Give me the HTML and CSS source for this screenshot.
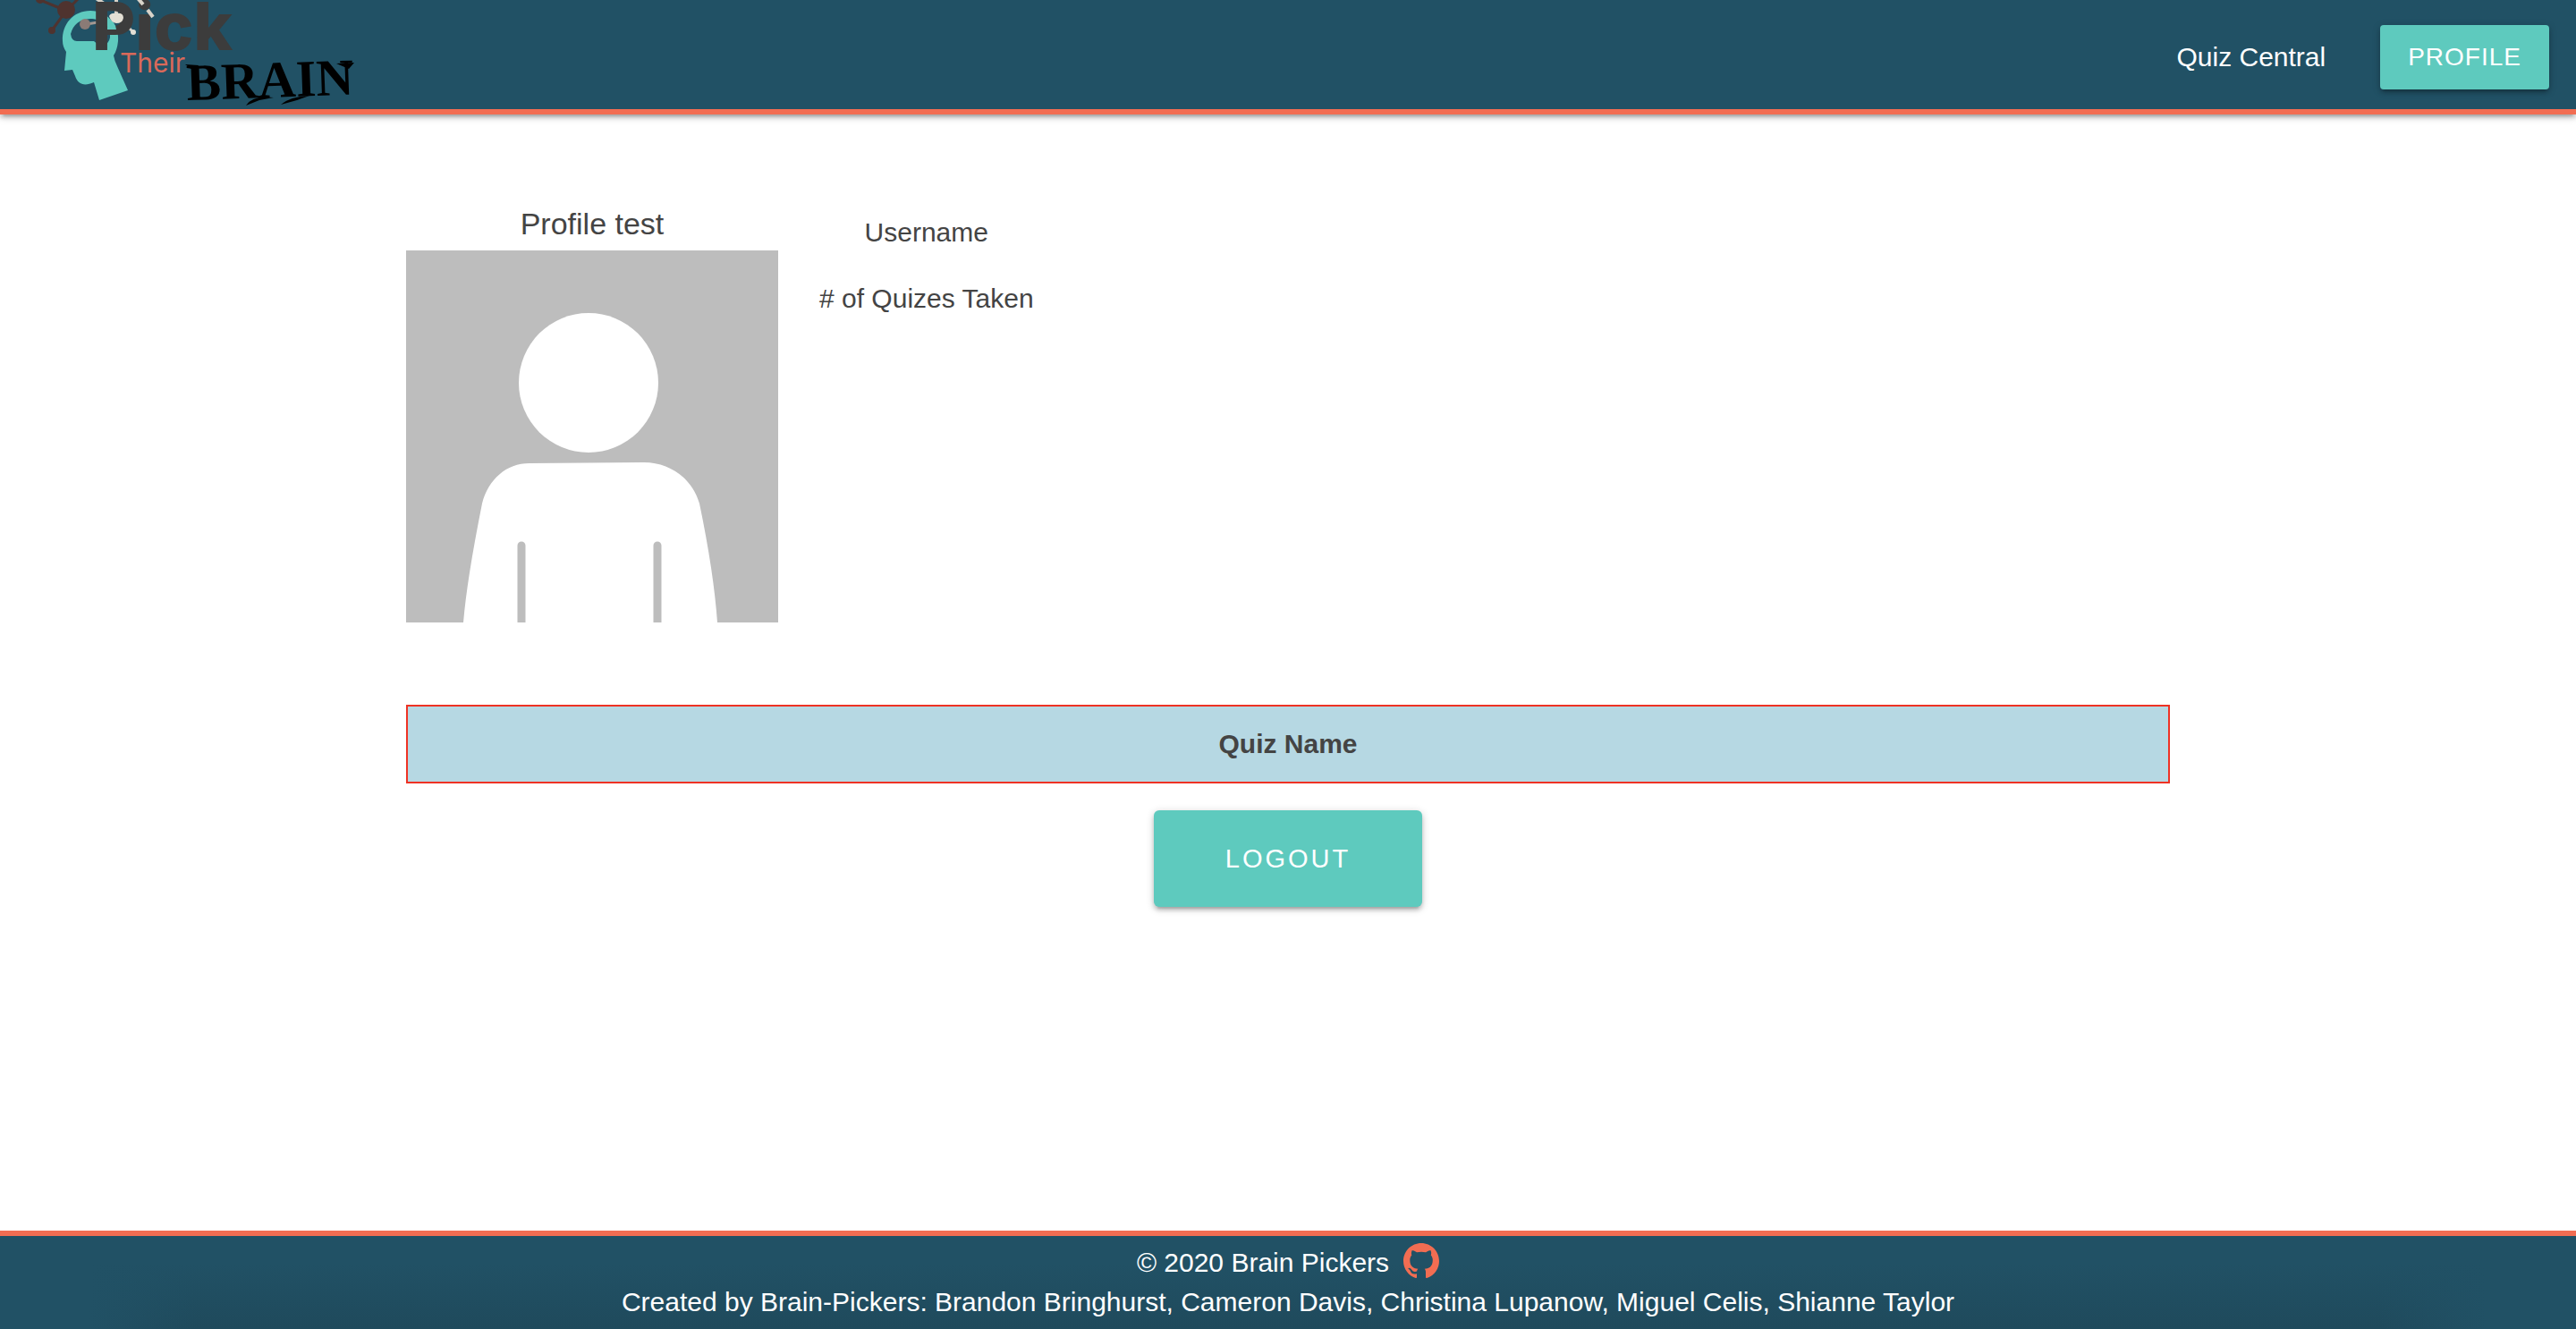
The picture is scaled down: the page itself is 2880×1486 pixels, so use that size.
FILE: index.html
```html
<!DOCTYPE html>
<html lang="en">
<head>
<meta charset="utf-8">
<title>Pick Their Brain - Profile</title>
<link rel="stylesheet" href="styles.css">
</head>
<body>
<header class="navbar">
  <a href="#" class="brand" aria-label="Pick Their Brain">
    <svg class="logo" viewBox="0 0 420 122" role="img" aria-label="Pick Their Brain">
      <g fill="#4f332f">
        <path d="M45 0L74 12L58 34M74 12L88 -2" fill="none" stroke="#4f332f" stroke-width="3"/>
        <circle cx="74" cy="11" r="10"/><circle cx="58" cy="34" r="4"/><circle cx="45" cy="-1" r="5"/>
      </g>
      <path fill="#5ecabe" fill-rule="evenodd" d="M70 46C69 27 82 12 101 12C121 12 134 30 132 46Q131 56 127 62Q128 68 131 74L143 101L111 112L105 92C94 97 87 94 84 85L81 78L72 79L74 58Q70 52 70 46ZM79 38Q80 46 86 46L105 46Q110 51 117 51Q124 46 123 38C123 28 112 21 101 21Q83 22 79 38Z"/>
      <g fill="none" stroke="#d8d3c9" stroke-width="4"><path d="M106 -3L122 8M130 -2V15"/><path d="M137 24L149 36" stroke-width="3"/></g>
      <path d="M97 27L109 25" stroke="#a39892" stroke-width="3"/>
      <circle cx="95" cy="27" r="6" fill="#8a7b76"/>
      <text class="logo-pick" x="103" y="56">Pick</text>
      <path fill="#5ecabe" d="M120 20Q129 24 130 33H120Z"/>
      <path fill="#e3dfd4" d="M122 18Q124 14 130 15Q138 14 138 20Q137 26 130 26Q124 25 122 18Z"/>
      <path d="M154 -2L160 5M165 11L171 19" stroke="#d8d3c9" stroke-width="4"/>
      <circle cx="149" cy="36" r="3" fill="#e3dfd4"/>
      <text class="logo-their" x="134" y="81">Their</text>
      <text class="logo-brain" x="209" y="112" transform="rotate(-2 209 112)">BRAIN</text>
      <path d="M275 118Q282 106 306 109L290 112ZM314 117Q324 108 346 107L332 112ZM207 72L222 73L218 80ZM396 70L376 71L390 77Z"/>
    </svg>
  </a>
  <nav class="nav-links">
    <a href="#" class="nav-link">Quiz Central</a>
    <a href="#" class="btn btn-small">PROFILE</a>
  </nav>
</header>
<main class="container">
  <section class="profile">
    <div class="profile-card">
      <h1 class="profile-title">Profile test</h1>
      <svg class="avatar" viewBox="0 0 416 416" role="img" aria-label="Profile picture">
        <rect width="416" height="416" fill="#bdbdbd"/>
        <circle cx="204" cy="148" r="78" fill="#fff"/>
        <path fill="#fff" d="M64 416Q68 368 85 283C92 256 112 238 138 238L266 237C296 237 320 256 328 283Q344 360 348 416Z"/>
        <path d="M129 418V330M281 418V330" stroke="#bdbdbd" stroke-width="9" stroke-linecap="round"/>
      </svg>
    </div>
    <div class="stats"><p>Username</p><p># of Quizes Taken</p></div>
  </section>
  <section class="quiz-row"><h2>Quiz Name</h2></section>
  <button type="button" class="btn btn-large">LOGOUT</button>
</main>
<footer class="footer">
  <p class="copyright">© 2020 Brain Pickers
    <a href="#" aria-label="GitHub"><svg class="github" viewBox="0 0 16 16"><path d="M8 0C3.58 0 0 3.58 0 8c0 3.54 2.29 6.53 5.47 7.59.4.07.55-.17.55-.38 0-.19-.01-.82-.01-1.49-2.01.37-2.53-.49-2.69-.94-.09-.23-.48-.94-.82-1.13-.28-.15-.68-.52-.01-.53.63-.01 1.08.58 1.23.82.72 1.21 1.87.87 2.33.66.07-.52.28-.87.51-1.07-1.78-.2-3.64-.89-3.64-3.95 0-.87.31-1.59.82-2.15-.08-.2-.36-1.02.08-2.12 0 0 .67-.21 2.2.82.64-.18 1.32-.27 2-.27s1.36.09 2 .27c1.53-1.04 2.2-.82 2.2-.82.44 1.1.16 1.92.08 2.12.51.56.82 1.27.82 2.15 0 3.07-1.87 3.75-3.65 3.95.29.25.54.73.54 1.48 0 1.07-.01 1.93-.01 2.2 0 .21.15.46.55.38A8.01 8.01 0 0 0 16 8c0-4.42-3.58-8-8-8z"/></svg></a>
  </p>
  <p>Created by Brain-Pickers: Brandon Bringhurst, Cameron Davis, Christina Lupanow, Miguel Celis, Shianne Taylor</p>
</footer>
</body>
</html>
```
FILE: styles.css
```css
* { box-sizing: border-box; }
body {
  margin: 0;
  min-height: 100vh;
  display: flex;
  flex-direction: column;
  font: 30px/44px "Liberation Sans", Arial, sans-serif;
  color: #444;
  background: #fff;
}
h1, h2, p { margin: 0; font-weight: 400; }
a { color: inherit; text-decoration: none; }
svg { display: block; }

.navbar {
  display: flex;
  justify-content: space-between;
  align-items: center;
  height: 128px;
  padding-right: 30px;
  background: #215165;
  border-bottom: 6px solid #f26d52;
  box-shadow: 0 4px 4px rgba(0, 0, 0, .14), 0 6px 2px -4px rgba(0, 0, 0, .12), 0 2px 10px rgba(0, 0, 0, .2);
  color: #fff;
}
.logo { width: 420px; height: 122px; }
.logo-pick { font: 800 74px Inter, sans-serif; fill: #3c3c3c; }
.logo-their { font: 30px Inter, sans-serif; fill: #d9695a; }
.logo-brain { font: 700 58px "Liberation Serif", serif; fill: #000; }
.nav-links { display: flex; align-items: center; gap: 61px; padding-top: 6px; }

.btn {
  display: inline-flex;
  justify-content: center;
  align-items: center;
  border: 0;
  background: #5ecabe;
  color: #fff;
  font-family: inherit;
  font-size: 28px;
  box-shadow: 0 4px 4px rgba(0, 0, 0, .14), 0 6px 2px -4px rgba(0, 0, 0, .12), 0 2px 10px rgba(0, 0, 0, .2);
}
.btn-small { height: 72px; padding: 0 31px; border-radius: 4px; letter-spacing: 1px; }
.btn-large { width: 300px; height: 108px; border-radius: 6px; font-size: 29px; letter-spacing: 3px; }

.container {
  flex: 1;
  width: 70%;
  margin: 0 auto;
  padding: 100px 22px 0;
  display: flex;
  flex-direction: column;
  align-items: center;
}
.profile { width: 100%; display: flex; gap: 46px; margin-bottom: 92px; }
.profile-title { font-size: 34px; line-height: 44px; margin-bottom: 8px; text-align: center; }
.avatar { width: 416px; height: 416px; }
.stats { display: flex; flex-direction: column; gap: 30px; padding-top: 10px; text-align: center; }
.quiz-row {
  width: 100%;
  margin-bottom: 30px;
  padding: 20px;
  border: 2px solid #ee3224;
  background: #b6d8e3;
  text-align: center;
}
.quiz-row h2 { font-size: 30px; font-weight: 700; }

.footer {
  padding: 8px 0;
  border-top: 6px solid #f26d52;
  background:
    linear-gradient(to right, #215165 100px, #21516500 220px, #21516500 calc(100% - 220px), #215165 calc(100% - 100px)),
    linear-gradient(#215165 30%, #1f4a5c);
  color: #fff;
  text-align: center;
}
.copyright { display: flex; justify-content: center; gap: 16px; }
.github { width: 40px; height: 40px; fill: #f26d52; }
```
